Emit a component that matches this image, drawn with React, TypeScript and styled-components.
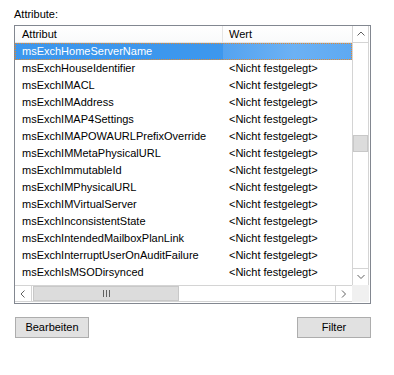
import styled, { createGlobalStyle } from 'styled-components'

const GlobalStyle = createGlobalStyle`
  html, body {
    margin: 0;
    padding: 0;
    background: #ffffff;
  }
  body {
    font-family: "Liberation Sans", Arial, sans-serif;
    font-size: 11px;
    color: #000000;
  }
`

const Page = styled.div`
  width: 394px;
  height: 375px;
  box-sizing: border-box;
  padding: 7px 0 0 14px;
`

const Label = styled.div`
  line-height: 14px;
  height: 14px;
  margin-bottom: 4px;
`

const ListBox = styled.div`
  width: 357px;
  height: 279px;
  box-sizing: border-box;
  border: 1px solid #828790;
  padding: 0 1px 1px 0;
  display: grid;
  grid-template-columns: 1fr 17px;
  grid-template-rows: 1fr 17px;
  overflow: hidden;
`

const Content = styled.div`
  overflow: hidden;
  display: flex;
  flex-direction: column;
`

const HeaderRow = styled.div`
  display: grid;
  grid-template-columns: 208px 1fr;
  height: 17px;
  flex: none;
  background: linear-gradient(#ffffff, #f9fafb);
  border-bottom: 1px solid #e5e5e5;
  box-sizing: border-box;
`

const HeaderCell = styled.div<{ $divider?: boolean }>`
  line-height: 16px;
  padding-left: ${p => (p.$divider ? '7px' : '6px')};
  border-right: ${p => (p.$divider ? '1px solid #e5e5e5' : 'none')};
  white-space: nowrap;
`

const Row = styled.div<{ $selected?: boolean }>`
  display: grid;
  grid-template-columns: 208px 1fr;
  height: 17px;
  flex: none;
  color: ${p => (p.$selected ? '#ffffff' : '#000000')};
  outline: ${p => (p.$selected ? '1px dotted #e98a2c' : 'none')};
  outline-offset: -1px;
`

const Cell = styled.div<{ $first?: boolean; $selected?: boolean }>`
  line-height: 17px;
  padding-left: ${p => (p.$first ? '7px' : '6px')};
  white-space: nowrap;
  overflow: hidden;
  background: ${p =>
    !p.$selected
      ? 'transparent'
      : p.$first
      ? '#3d97ed'
      : 'linear-gradient(90deg, #55a3ef 0%, #6cb1f4 55%, #5ea9f2 100%)'};
`

const VScroll = styled.div`
  display: flex;
  flex-direction: column;
  border-left: 1px solid #d4d4d4;
  border-right: 1px solid #d4d4d4;
  box-sizing: border-box;
  background: #ffffff;
`

const HScroll = styled.div`
  display: flex;
  flex-direction: row;
  border-top: 1px solid #d4d4d4;
  border-bottom: 1px solid #d4d4d4;
  box-sizing: border-box;
  background: #ffffff;
`

const ArrowButton = styled.div<{ $vertical?: boolean }>`
  flex: none;
  width: ${p => (p.$vertical ? '15px' : '17px')};
  height: ${p => (p.$vertical ? '17px' : '15px')};
  box-sizing: border-box;
  display: flex;
  align-items: center;
  justify-content: center;
  border-color: #d4d4d4;
  border-style: solid;
  border-width: 0;
`

const Track = styled.div<{ $vertical?: boolean }>`
  flex: 1;
  display: flex;
  flex-direction: ${p => (p.$vertical ? 'column' : 'row')};
`

const Thumb = styled.div<{ $vertical?: boolean }>`
  flex: none;
  box-sizing: border-box;
  background: #dcdcdc;
  border: 1px solid #c8c8c8;
  display: flex;
  align-items: center;
  justify-content: center;
  ${p => (p.$vertical ? 'width: 15px; height: 17px;' : 'height: 15px; width: 146px;')}
`

const Corner = styled.div`
  background: #f0f0f0;
`

const Actions = styled.div`
  width: 356px;
  margin: 13px 0 0 1px;
  display: flex;
  justify-content: space-between;
`

const Button = styled.button`
  width: 74px;
  height: 21px;
  box-sizing: border-box;
  background: #e1e1e1;
  border: 1px solid #adadad;
  border-radius: 0;
  padding: 0;
  font-family: "Liberation Sans", Arial, sans-serif;
  font-size: 11px;
  color: #000000;
  line-height: 19px;
`

const Chevron = ({ dir }: { dir: 'up' | 'down' | 'left' | 'right' }) => {
  const paths: Record<string, string> = {
    up: 'M0.5 4.5 L4 1 L7.5 4.5',
    down: 'M0.5 1 L4 4.5 L7.5 1',
    left: 'M4.5 0.5 L1 4 L4.5 7.5',
    right: 'M1 0.5 L4.5 4 L1 7.5',
  }
  const vertical = dir === 'up' || dir === 'down'
  return (
    <svg width={vertical ? 8 : 6} height={vertical ? 6 : 8} viewBox={vertical ? '0 0 8 6' : '0 0 6 8'}>
      <path d={paths[dir]} fill="none" stroke="#606060" strokeWidth="1" />
    </svg>
  )
}

const Grip = () => (
  <svg width="7" height="7" viewBox="0 0 7 7">
    <path d="M0.5 0 V7 M3.5 0 V7 M6.5 0 V7" stroke="#606060" strokeWidth="1" />
  </svg>
)

const attributes = [
  'msExchHomeServerName',
  'msExchHouseIdentifier',
  'msExchIMACL',
  'msExchIMAddress',
  'msExchIMAP4Settings',
  'msExchIMAPOWAURLPrefixOverride',
  'msExchIMMetaPhysicalURL',
  'msExchImmutableId',
  'msExchIMPhysicalURL',
  'msExchIMVirtualServer',
  'msExchInconsistentState',
  'msExchIntendedMailboxPlanLink',
  'msExchInterruptUserOnAuditFailure',
  'msExchIsMSODirsynced',
]

// scroll position of the vertical thumb within its track (0..1)
const vScrollPos = 0.44

export default function App() {
  return (
    <>
      <GlobalStyle />
      <Page>
        <Label>Attribute:</Label>
        <ListBox>
          <Content>
            <HeaderRow>
              <HeaderCell $divider>Attribut</HeaderCell>
              <HeaderCell>Wert</HeaderCell>
            </HeaderRow>
            {attributes.map((name, i) => {
              const selected = i === 0
              return (
                <Row key={name} $selected={selected}>
                  <Cell $first $selected={selected}>{name}</Cell>
                  <Cell $selected={selected}>{selected ? '' : '<Nicht festgelegt>'}</Cell>
                </Row>
              )
            })}
          </Content>
          <VScroll>
            <ArrowButton $vertical style={{ borderBottomWidth: 1 }}>
              <Chevron dir="up" />
            </ArrowButton>
            <Track $vertical>
              <div style={{ flex: vScrollPos }} />
              <Thumb $vertical />
              <div style={{ flex: 1 - vScrollPos }} />
            </Track>
            <ArrowButton $vertical style={{ borderTopWidth: 1 }}>
              <Chevron dir="down" />
            </ArrowButton>
          </VScroll>
          <HScroll>
            <ArrowButton style={{ borderRightWidth: 1 }}>
              <Chevron dir="left" />
            </ArrowButton>
            <Track>
              <Thumb style={{ marginLeft: 1 }}>
                <Grip />
              </Thumb>
            </Track>
            <ArrowButton style={{ borderLeftWidth: 1 }}>
              <Chevron dir="right" />
            </ArrowButton>
          </HScroll>
          <Corner />
        </ListBox>
        <Actions>
          <Button>Bearbeiten</Button>
          <Button>Filter</Button>
        </Actions>
      </Page>
    </>
  )
}
